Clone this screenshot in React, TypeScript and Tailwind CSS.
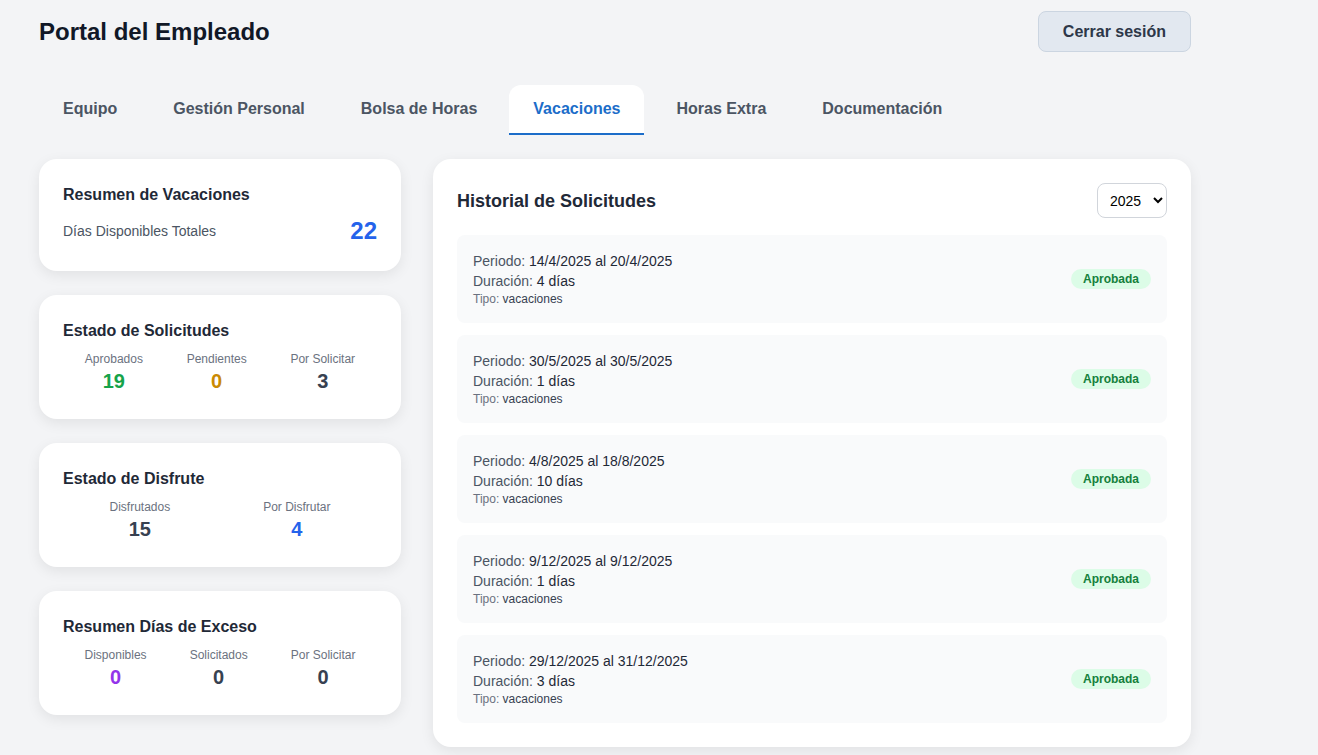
import React from 'react';

const tabs = ['Equipo', 'Gestión Personal', 'Bolsa de Horas', 'Vacaciones', 'Horas Extra', 'Documentación'];

const solicitudes = [
  { periodo: '14/4/2025 al 20/4/2025', dias: 4 },
  { periodo: '30/5/2025 al 30/5/2025', dias: 1 },
  { periodo: '4/8/2025 al 18/8/2025', dias: 10 },
  { periodo: '9/12/2025 al 9/12/2025', dias: 1 },
  { periodo: '29/12/2025 al 31/12/2025', dias: 3 },
];

type Stat = { label: string; value: number; color: string };

const StatCard: React.FC<{ title: string; stats: Stat[] }> = ({ title, stats }) => (
  <div className="bg-white rounded-[18px] shadow-[0_4px_14px_rgba(0,0,0,0.08)] p-6">
    <h3 className="text-base font-bold text-[#1f2937] mb-2">{title}</h3>
    <div className="flex justify-around">
      {stats.map((s) => (
        <div key={s.label} className="text-center">
          <div className="text-xs text-[#6b7280]">{s.label}</div>
          <div className={`text-xl font-bold ${s.color}`}>{s.value}</div>
        </div>
      ))}
    </div>
  </div>
);

const App: React.FC = () => {
  return (
    <div
      className="min-h-screen bg-[#f3f4f6] pt-[11px] pl-[39px]"
      style={{ fontFamily: '"Liberation Sans", Arial, sans-serif' }}
    >
      <div className="w-[1152px]">
        {/* header */}
        <div className="flex items-center justify-between mb-[33px]">
          <h1 className="text-2xl font-bold text-[#111827]">Portal del Empleado</h1>
          <button className="bg-[#e2e8f0] border border-[#cbd5e1] rounded-lg px-6 py-2 leading-[23px] font-semibold text-[#2d3748]">
            Cerrar sesión
          </button>
        </div>

        {/* tabs */}
        <div className="flex gap-2">
          {tabs.map((t) => {
            const active = t === 'Vacaciones';
            return (
              <div
                key={t}
                className={
                  active
                    ? 'px-6 py-3 font-semibold bg-white rounded-t-xl border-b-2 border-[#1c6dc9] text-[#1c6dc9]'
                    : 'px-6 py-3 font-semibold text-[#4b5563] border-b-2 border-transparent'
                }
              >
                {t}
              </div>
            );
          })}
        </div>

        <div className="flex gap-8 mt-6 pb-2">
          {/* left column */}
          <div className="w-[362px] shrink-0 flex flex-col gap-6">
            <div className="bg-white rounded-[18px] shadow-[0_4px_14px_rgba(0,0,0,0.08)] p-6">
              <h3 className="text-base font-bold text-[#1f2937] mb-2">Resumen de Vacaciones</h3>
              <div className="flex items-center justify-between">
                <span className="text-sm text-[#4b5563]">Días Disponibles Totales</span>
                <span className="text-2xl font-bold text-[#2563eb]">22</span>
              </div>
            </div>
            <StatCard
              title="Estado de Solicitudes"
              stats={[
                { label: 'Aprobados', value: 19, color: 'text-[#16a34a]' },
                { label: 'Pendientes', value: 0, color: 'text-[#ca8a04]' },
                { label: 'Por Solicitar', value: 3, color: 'text-[#374151]' },
              ]}
            />
            <StatCard
              title="Estado de Disfrute"
              stats={[
                { label: 'Disfrutados', value: 15, color: 'text-[#374151]' },
                { label: 'Por Disfrutar', value: 4, color: 'text-[#2563eb]' },
              ]}
            />
            <StatCard
              title="Resumen Días de Exceso"
              stats={[
                { label: 'Disponibles', value: 0, color: 'text-[#9333ea]' },
                { label: 'Solicitados', value: 0, color: 'text-[#374151]' },
                { label: 'Por Solicitar', value: 0, color: 'text-[#374151]' },
              ]}
            />
          </div>

          {/* right panel */}
          <div className="flex-1 bg-white rounded-[18px] shadow-[0_4px_14px_rgba(0,0,0,0.08)] p-6">
            <div className="flex items-center justify-between mb-[17px]">
              <h2 className="text-lg font-bold text-[#1f2937]">Historial de Solicitudes</h2>
              <select className="w-[70px] h-[35px] border border-[#d1d5db] rounded-lg px-2 text-sm text-black bg-white">
                <option>2025</option>
                <option>2024</option>
              </select>
            </div>
            <div className="flex flex-col gap-3">
              {solicitudes.map((s) => (
                <div key={s.periodo} className="bg-[#f9fafb] rounded-lg p-4 flex items-center justify-between">
                  <div>
                    <div className="text-sm text-[#4b5563]">
                      Periodo: <span className="text-[#1f2937]">{s.periodo}</span>
                    </div>
                    <div className="text-sm text-[#4b5563]">
                      Duración: <span className="text-[#1f2937]">{s.dias} días</span>
                    </div>
                    <div className="text-xs text-[#6b7280]">
                      Tipo: <span className="text-[#374151]">vacaciones</span>
                    </div>
                  </div>
                  <span className="bg-[#dcfce7] text-[#15803d] text-xs font-semibold rounded-full px-3 py-[2px]">
                    Aprobada
                  </span>
                </div>
              ))}
            </div>
          </div>
        </div>
      </div>
    </div>
  );
};

export default App;
